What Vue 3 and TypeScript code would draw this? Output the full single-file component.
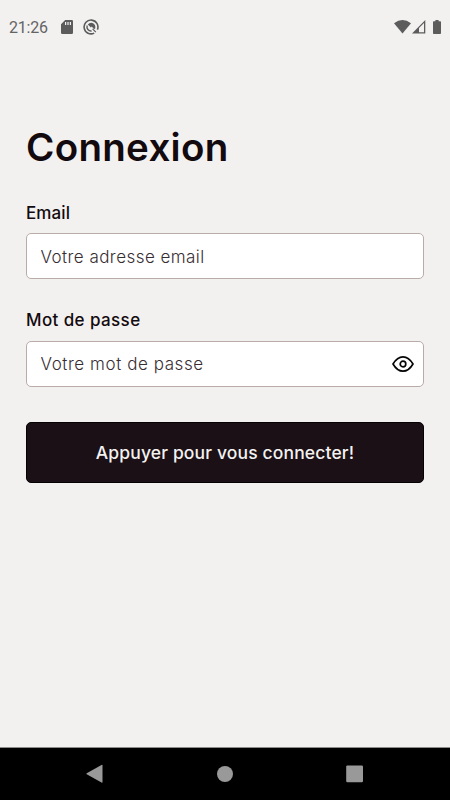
<script setup lang="ts">
import { ref } from 'vue'

const email = ref('')
const password = ref('')
const passwordVisible = ref(false)
</script>

<template>
  <div class="screen">
    <header class="status-bar">
      <span class="clock">21:26</span>
      <svg class="sd" width="12" height="14" viewBox="0 0 12 14">
        <path fill="#5c5c5c" fill-rule="evenodd" d="M4.2 0H10.8Q12 0 12 1.2V12.8Q12 14 10.8 14H1.2Q0 14 0 12.8V4.2ZM4 2V5H5.2V2ZM6.4 2V5H7.6V2ZM8.8 2V5H10V2Z" />
      </svg>
      <svg class="sync" width="16" height="16" viewBox="0 0 16 16" fill="none" stroke="#5c5c5c">
        <path stroke-width="1.6" d="M11.2 14.1A6.9 6.9 0 1 1 14.4 10.6" />
        <path stroke-width="1.4" d="M8.6 12A4.1 4.1 0 0 1 4.2 6.6" />
        <path fill="#5c5c5c" stroke="none" d="M4.8 5.5Q6.8 3.2 9.4 4Q12.8 5.2 12.3 9.2L11.1 10.2L8.8 7.4L7.9 8.5Z" />
        <path stroke-width="1.2" d="M9.6 9.8L12.8 13.2" />
      </svg>
      <span class="spacer"></span>
      <svg class="wifi" width="17" height="14" viewBox="0 0 17 14">
        <path fill="#5c5c5c" d="M0 3.3Q8.5-3.2 17 3.3L8.5 13.6Z" />
      </svg>
      <svg class="signal" width="14" height="14" viewBox="0 0 14 14">
        <path fill="#5c5c5c" fill-rule="evenodd" d="M0 13.5L13.3 0V13.5ZM7 8V12.3H12V3Z" />
      </svg>
      <svg class="battery" width="8" height="14" viewBox="0 0 8 14">
        <path fill="#5c5c5c" d="M2.4 0H5.6V1.2H7.2Q8 1.2 8 2V13Q8 14 7.2 14H.8Q0 14 0 13V2Q0 1.2.8 1.2H2.4Z" />
      </svg>
    </header>

    <main class="content">
      <h1>Connexion</h1>
      <form @submit.prevent>
        <label class="email-label" for="email">Email</label>
        <div class="field">
          <input id="email" v-model="email" class="email-input" type="email" placeholder="Votre adresse email" />
        </div>
        <label class="password-label" for="password">Mot de passe</label>
        <div class="field">
          <input id="password" v-model="password" class="password-input" :type="passwordVisible ? 'text' : 'password'" placeholder="Votre mot de passe" />
          <button class="toggle" type="button" @click="passwordVisible = !passwordVisible">
            <svg width="22" height="18" viewBox="0 0 22 18" fill="none" stroke="#050505" stroke-width="1.7" stroke-linejoin="round">
              <path d="M1 9Q5.2 1.8 11 1.8T21 9Q16.8 16.2 11 16.2T1 9Z" />
              <circle cx="11" cy="9" r="2.8" />
            </svg>
          </button>
        </div>
        <button class="submit" type="submit"><span>Appuyer pour vous connecter!</span></button>
      </form>
    </main>

    <nav class="nav-bar">
      <svg width="18" height="20" viewBox="0 0 18 20"><path fill="#999" d="M.7 9.3L15.5.9Q16.5.5 16.5 1.5V18Q16.5 19 15.5 18.6L.7 10.3Q0 9.8.7 9.3Z" /></svg>
      <svg width="18" height="20" viewBox="0 0 18 20"><circle cx="9" cy="10" r="8" fill="#999" /></svg>
      <svg width="18" height="20" viewBox="0 0 18 20"><rect x=".2" y="1.4" width="16.8" height="16.8" rx="1.2" fill="#999" /></svg>
    </nav>
  </div>
</template>

<style>
body {
  margin: 0;
  background: #f2f1f0;
}
</style>

<style scoped>
.screen {
  display: flex;
  flex-direction: column;
  width: 450px;
  height: 800px;
  overflow: hidden;
  background: #f2f1f0;
  color: #120a0e;
  font-family: Inter, "Liberation Sans", sans-serif;
}

.status-bar {
  display: flex;
  align-items: center;
  box-sizing: border-box;
  height: 54px;
  padding: 0 9px;
  flex: none;
}

.clock {
  width: 52px;
  padding-top: 1px;
  color: #646464;
  font: 400 16px Roboto, sans-serif;
  letter-spacing: -0.2px;
}

.sync {
  margin-left: 10px;
}

.spacer {
  flex: 1;
}

.signal {
  margin: 0 7px 0 1px;
}

.content {
  flex: 1;
  padding: 67px 26px 0;
}

h1 {
  margin: 0;
  height: 52px;
  font-size: 38.5px;
  font-weight: 600;
  line-height: 52px;
  letter-spacing: 0.3px;
  white-space: nowrap;
}

form {
  display: flex;
  flex-direction: column;
  padding-top: 28px;
}

label {
  height: 24px;
  margin-bottom: 8px;
  font-size: 17px;
  font-weight: 500;
  line-height: 24px;
}

.email-label {
  letter-spacing: 0.1px;
}

.password-label {
  letter-spacing: 0.4px;
}

.field {
  display: flex;
  align-items: center;
  box-sizing: border-box;
  height: 46px;
  margin-bottom: 29px;
  padding: 0 9px 0 13.5px;
  border: 1px solid #b9aca8;
  border-radius: 5px;
  background: #fff;
}

.password-label {
  margin-bottom: 9px;
}

input {
  flex: 1;
  min-width: 0;
  height: 40px;
  padding: 1px 0 0;
  border: 0;
  outline: 0;
  background: transparent;
  color: #1a1015;
  font: 300 17px Inter, sans-serif;
}

.email-input {
  letter-spacing: 0.45px;
}

.password-input {
  padding: 0 0 1px;
  letter-spacing: 0.57px;
}

input::placeholder {
  color: #382e32;
  opacity: 1;
}

.toggle {
  display: flex;
  padding: 0;
  border: 0;
  background: transparent;
}

.submit {
  height: 61px;
  margin-top: 6px;
  padding: 0 0 1px;
  border: 1px solid #050204;
  border-radius: 5px;
  background: #1a1015;
  color: #f4f2f1;
  font: 500 17.5px Inter, sans-serif;
  letter-spacing: 0.14px;
}

.nav-bar {
  display: flex;
  align-items: center;
  justify-content: space-between;
  box-sizing: border-box;
  flex: none;
  height: 53px;
  padding: 0 86px;
  border-top: 1px solid #8c8c8c;
  background: #000;
}
</style>
